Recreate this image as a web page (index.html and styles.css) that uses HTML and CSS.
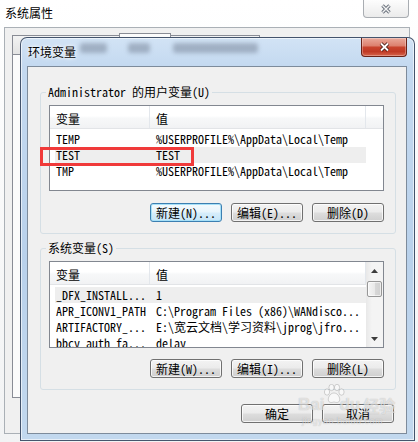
FILE: index.html
```html
<!DOCTYPE html>
<html lang="zh-CN">
<head>
<meta charset="utf-8">
<title>环境变量</title>
<link rel="stylesheet" href="styles.css">
</head>
<body>
<div class="desk">
  <div class="bgwin">
    <div class="bgwin-title">
      <span class="bgwin-title-text">系统属性</span>
      <span class="bgwin-close">
        <svg width="12" height="10" viewBox="0 0 12 10"><path d="M2.5 1.5 L9.5 8.5 M9.5 1.5 L2.5 8.5" stroke="#6f7680" stroke-width="3.4"/><path d="M2.5 1.5 L9.5 8.5 M9.5 1.5 L2.5 8.5" stroke="#f4f4f4" stroke-width="1.4"/></svg>
      </span>
    </div>
    <div class="bgwin-body">
      <div class="bg-tabs">
        <div class="bg-tab t1"></div>
        <div class="bg-tab t2"></div>
        <div class="bg-tab t3"></div>
      </div>
      <div class="bg-tabpage"></div>
    </div>
  </div>

  <div class="dlg">
    <div class="dlg-title">
      <span class="dlg-title-text">环境变量</span>
      <span class="ghosts"><i class="ghost g1"></i><i class="ghost g2"></i><i class="ghost g3"></i></span>
      <span class="dlg-close">
        <svg width="13" height="10" viewBox="0 0 13 10"><path d="M3 1.5 L10 8.5 M10 1.5 L3 8.5" stroke="#4a1c14" stroke-width="3.6"/><path d="M3 1.5 L10 8.5 M10 1.5 L3 8.5" stroke="#ffffff" stroke-width="1.8"/></svg>
      </span>
    </div>
    <div class="client">
      <fieldset class="grp grp1">
        <legend>Administrator 的用户变量(U)</legend>
        <div class="lv lv1">
          <div class="lv-main">
            <div class="lv-head"><span class="hc hc1">变量</span><span class="hc hc2">值</span><span class="hc hc3"></span></div>
            <div class="rows">
              <div class="row"><span class="rc1">TEMP</span><span class="rc2">%USERPROFILE%\AppData\Local\Temp</span></div>
              <div class="row sel"><span class="rc1">TEST</span><span class="rc2">TEST</span></div>
              <div class="row"><span class="rc1">TMP</span><span class="rc2">%USERPROFILE%\AppData\Local\Temp</span></div>
            </div>
          </div>
        </div>
        <div class="btns">
          <button class="btn focus">新建(N)...</button>
          <button class="btn">编辑(E)...</button>
          <button class="btn">删除(D)</button>
        </div>
      </fieldset>

      <fieldset class="grp grp2">
        <legend>系统变量(S)</legend>
        <div class="lv lv2">
          <div class="lv-main">
            <div class="lv-head"><span class="hc hc1">变量</span><span class="hc hc2">值</span></div>
            <div class="rows">
              <div class="row sel"><span class="rc1">_DFX_INSTALL...</span><span class="rc2">1</span></div>
              <div class="row"><span class="rc1">APR_ICONV1_PATH</span><span class="rc2">C:\Program Files (x86)\WANdisco...</span></div>
              <div class="row"><span class="rc1">ARTIFACTORY_...</span><span class="rc2">E:\宽云文档\学习资料\jprog\jfro...</span></div>
              <div class="row"><span class="rc1">bbcy_auth_fa...</span><span class="rc2">delay</span></div>
            </div>
          </div>
          <div class="sb">
            <div class="sb-btn"><svg width="7" height="4" viewBox="0 0 7 4"><path d="M0 4 L3.5 0 L7 4 Z" fill="#3c3c3c"/></svg></div>
            <div class="sb-thumb"></div>
            <div class="sb-track"></div>
            <div class="sb-btn"><svg width="7" height="4" viewBox="0 0 7 4"><path d="M0 0 L7 0 L3.5 4 Z" fill="#3c3c3c"/></svg></div>
          </div>
        </div>
        <div class="btns">
          <button class="btn">新建(W)...</button>
          <button class="btn">编辑(I)...</button>
          <button class="btn">删除(L)</button>
        </div>
      </fieldset>

      <div class="okrow">
        <button class="btn">确定</button>
        <button class="btn">取消</button>
      </div>

      <div class="mark"></div>
    </div>
  </div>

  <div class="watermark">
    <div class="wm-line1"><span>Bai</span><svg class="paw" width="22" height="20" viewBox="0 0 22 20"><ellipse cx="4" cy="8" rx="2.6" ry="3.2"/><ellipse cx="8.5" cy="3.5" rx="2.6" ry="3.2"/><ellipse cx="14" cy="3.5" rx="2.6" ry="3.2"/><ellipse cx="18.5" cy="8" rx="2.6" ry="3.2"/><path d="M11 9 C7 9 4.5 14 5.5 17 C7 19.5 10 18 11 18 C12 18 15 19.5 16.5 17 C17.5 14 15 9 11 9 Z"/></svg><span>du</span><span class="wm-cn">经验</span></div>
    <div class="wm-line2">jingyan.baidu.com</div>
  </div>
</div>
</body>
</html>
```

FILE: styles.css
```css
* { box-sizing: border-box; margin: 0; padding: 0; }
html, body { width: 418px; height: 442px; overflow: hidden; }
body {
  background: #f4f5f6;
  font-family: "Noto Sans Mono CJK SC", "Noto Sans CJK SC", "Liberation Mono", monospace;
  font-size: 12px;
  color: #000;
}
.desk { position: relative; width: 418px; height: 442px; overflow: hidden; }

/* ---------- background window: 系统属性 ---------- */
.bgwin {
  display: flex;
  flex-direction: column;
  width: 418px;
  height: 442px;
  background: linear-gradient(#ffffff, #f2f3f4);
}
.bgwin-title { display: flex; align-items: flex-start; height: 27px; padding-left: 5px; flex: none; }
.bgwin-title-text { margin-top: 5px; line-height: 16px; font-family: "Noto Sans CJK SC", sans-serif; }
.bgwin-close {
  margin-left: auto;
  margin-right: 9px;
  width: 46px;
  height: 18px;
  border: 1px solid #a9adb2;
  border-top: none;
  border-radius: 0 0 4px 4px;
  background: linear-gradient(#fdfdfd, #ebebeb);
  display: flex;
  align-items: center;
  justify-content: center;
}
.bgwin-body {
  flex: 1;
  margin: 0 8px 8px 4px;
  border: 1px solid #aab0b6;
  background: #f0f0f0;
  padding: 5px 0 0 7px;
  overflow: hidden;
}
.bg-tabs { display: flex; align-items: flex-end; height: 21px; }
.bg-tab { height: 19px; border: 1px solid #898c95; border-bottom: none; background: linear-gradient(#f3f3f3, #e3e3e3); }
.bg-tab.t1 { width: 108px; }
.bg-tab.t2 { width: 52px; height: 21px; margin-left: -1px; background: #fbfbfb; }
.bg-tab.t3 { width: 90px; margin-left: -1px; }
.bg-tabpage { width: 420px; height: 344px; border: 1px solid #898c95; background: #fbfbfb; }

/* ---------- dialog: 环境变量 ---------- */
.dlg {
  position: absolute;
  left: 20px;
  top: 37px;
  width: 395px;
  height: 404px;
  display: flex;
  flex-direction: column;
  padding: 0 7px 6px 6px;
  border: 1px solid rgba(35, 50, 75, 0.8);
  border-radius: 7px 7px 0 0;
  background: linear-gradient(#d2e3f5 0, #c4d9f0 28px, #b9d1eb 55%, #c2d8ee 100%);
  box-shadow: inset 0 0 0 1px rgba(255, 255, 255, 0.6);
}
.dlg-title { display: flex; align-items: flex-start; height: 28px; flex: none; }
.dlg-title-text {
  margin: 6px 0 0 1px;
  line-height: 16px;
  font-family: "Noto Sans CJK SC", sans-serif;
  text-shadow: 0 0 5px #fff, 0 0 3px #fff;
}
.ghosts { display: flex; margin: 5px 0 0 4px; }
.ghost { display: block; height: 10px; border-radius: 3px; background: rgba(55, 66, 85, 0.3); filter: blur(2px); }
.ghost.g1 { width: 27px; }
.ghost.g2 { width: 22px; margin-left: 21px; }
.ghost.g3 { width: 85px; margin-left: 23px; }
.dlg-close {
  margin-left: auto;
  width: 46px;
  height: 19px;
  border: 1px solid #6a2216;
  border-top: none;
  border-radius: 0 0 4px 4px;
  background: linear-gradient(#eaa99a 0, #dd8270 42%, #c8432d 52%, #c03a25 75%, #d6654c 100%);
  box-shadow: inset 0 0 0 1px rgba(255, 255, 255, 0.3);
  display: flex;
  align-items: center;
  justify-content: center;
}

.client {
  position: relative;
  flex: 1;
  border: 1px solid #7d8b9b;
  background: #f0f0f0;
  padding: 0 10px 10px 12px;
  display: flex;
  flex-direction: column;
}

/* group boxes */
.grp {
  border: 1px solid #d5dfe5;
  border-radius: 3px;
  padding: 6px 11px 11px 8px;
  min-width: 0;
}
.grp1 { margin-top: 18px; }
.grp2 { margin-top: 7px; }
.grp legend { margin-left: -3px; padding: 0 2px; line-height: 14px; font-size: 12px; }

/* list views */
.lv { display: flex; border: 1px solid #828790; background: #fff; overflow: hidden; }
.lv1 { height: 86px; }
.lv2 { height: 87px; }
.lv-main { flex: 1; min-width: 0; }
.lv-head {
  display: flex;
  height: 23px;
  background: linear-gradient(#ffffff 0, #ffffff 45%, #f7f8f9 55%, #f1f2f4 100%);
  border-bottom: 1px solid #e2e4e7;
}
.hc { padding: 4px 0 0 6px; line-height: 18px; border-right: 1px solid #e3e7ec; white-space: pre; }
.hc1 { width: 100px; }
.hc2 { width: 216px; }
.hc3 { flex: 1; border-right: none; }
.rows { padding-top: 2px; }
.row { display: flex; width: 311px; height: 16px; margin-left: 5px; line-height: 16px; white-space: pre; }
.row.sel { background: #eeeeee; }
.rc1 { width: 95px; padding-left: 1px; overflow: hidden; }
.rc2 { flex: 1; padding-left: 6px; overflow: hidden; }

/* scrollbar */
.sb {
  width: 17px;
  flex: none;
  display: flex;
  flex-direction: column;
  background: linear-gradient(to right, #e8e8e8, #f4f4f4 35%, #f4f4f4);
}
.sb-btn { height: 17px; flex: none; display: flex; align-items: center; justify-content: center; }
.sb-thumb {
  flex: none;
  height: 16px;
  margin: 2px 1px 0 1px;
  border: 1px solid #979797;
  border-radius: 2px;
  background: linear-gradient(to right, #f5f5f5, #e9e9e9 50%, #d8d8d8 50%, #d0d0d0);
  box-shadow: inset 0 0 0 1px rgba(255, 255, 255, 0.6);
}
.sb-track { flex: 1; }

/* buttons */
.btns { display: flex; justify-content: flex-end; gap: 9px; margin-top: 12px; }
.grp2 .btns { margin-top: 11px; }
.btn {
  width: 72px;
  height: 19px;
  border: 1px solid #707070;
  border-radius: 3px;
  background: linear-gradient(#f3f3f3 0, #ebebeb 48%, #dddddd 52%, #cfcfcf 100%);
  box-shadow: inset 0 0 0 1px rgba(255, 255, 255, 0.75);
  font: inherit;
  font-size: 12px;
  line-height: 17px;
  text-align: center;
  color: #000;
  white-space: pre;
}
.btn.focus {
  border-color: #3c7fb1;
  background: linear-gradient(#f4fafd 0, #e7f4fc 48%, #d6edfb 52%, #c6e5f8 100%);
  box-shadow: inset 0 0 0 1px #a6e0f8;
}
.okrow { display: flex; justify-content: flex-end; gap: 9px; margin: 14px 2px 0 0; }

/* red annotation box */
.mark {
  position: absolute;
  left: 12px;
  top: 80px;
  width: 154px;
  height: 19px;
  border: 3px solid #f03a3a;
}

/* watermark */
.watermark {
  position: absolute;
  left: 298px;
  top: 386px;
  color: rgba(255, 255, 255, 0.6);
  text-shadow: 0 0 1px rgba(0, 0, 0, 0.28);
  font-family: "Liberation Sans", sans-serif;
  pointer-events: none;
}
.wm-line1 { display: flex; align-items: flex-end; font-size: 17px; font-weight: bold; line-height: 18px; height: 30px; }
.wm-line1 span { padding-bottom: 2px; }
.paw { fill: rgba(255, 255, 255, 0.55); stroke: rgba(0, 0, 0, 0.2); stroke-width: 0.8; margin: 0 -6px 12px -1px; }
.wm-cn { font-family: "Noto Sans CJK SC", sans-serif; font-size: 16px; margin-left: 3px; }
.wm-line2 { font-size: 9px; line-height: 10px; margin-left: 4px; letter-spacing: 0.5px; }
```
